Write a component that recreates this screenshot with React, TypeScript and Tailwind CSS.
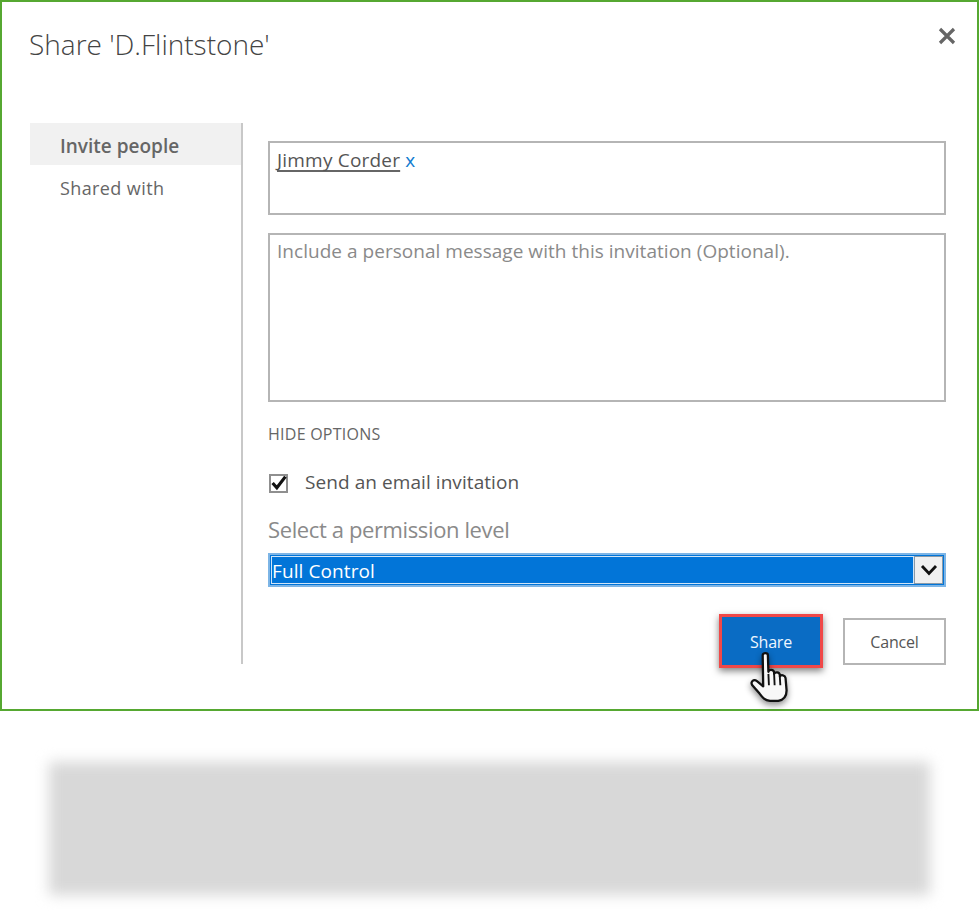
export default function App() {
  return (
    <div className="w-[979px] h-[923px] bg-white overflow-hidden font-['Open_Sans','Noto_Sans',sans-serif] text-[#555]">
      <div className="h-[711px] border-2 border-[#56a831] flex flex-col">
        <div className="flex justify-between items-start pl-[27px] pr-[21px] pt-[23px] h-[121px]">
          <h1 className="text-[28px] leading-[38px] font-light text-[#444] tracking-[0px]">Share 'D.Flintstone'</h1>
          <svg width="18" height="18" viewBox="0 0 18 18" className="mt-[2px]">
            <path d="M2 2 L16 16 M16 2 L2 16" stroke="#666" strokeWidth="3.2" />
          </svg>
        </div>
        <div className="flex pl-[28px] pr-[31px]">
          <div className="w-[213px] h-[541px] border-r-2 border-[#c8c8c8]">
            <div className="h-[42px] bg-[#f1f1f1] pl-[30px] pt-[4px] flex items-center text-[19px] font-semibold text-[#666] tracking-[0px]">Invite people</div>
            <div className="h-[42px] pl-[30px] pt-[4px] flex items-center text-[18px] text-[#666] tracking-[0.4px]">Shared with</div>
          </div>
          <div className="flex-1 pl-[25px] pt-[18px] flex flex-col">
            <div className="h-[74px] border-2 border-[#b5b5b5] px-[7px] pt-[4px] text-[19px] leading-[26px] tracking-[0.2px]">
              <span className="underline decoration-[#666] decoration-2 underline-offset-[3px] [text-decoration-skip-ink:none] text-[#555]">Jimmy Corder</span>{" "}
              <span className="text-[#0f7bd0]">x</span>
            </div>
            <div className="mt-[18px] h-[169px] border-2 border-[#b5b5b5] px-[7px] pt-[3px] text-[19px] leading-[26px] tracking-[0.03px] text-[#8a8a8a]">
              Include a personal message with this invitation (Optional).
            </div>
            <div className="mt-[20px] h-[24px] flex items-center text-[16px] text-[#666] tracking-[0.25px]">HIDE OPTIONS</div>
            <div className="mt-[26px] flex items-center h-[24px]">
              <div className="ml-[1px] mb-[2px] w-[19px] h-[19px] border-2 border-[#8f8f8f] flex items-center justify-center">
                <svg width="16" height="16" viewBox="0 0 15 15" className="shrink-0">
                  <path d="M1.5 7.5 L5.5 12 L13.5 1.5" fill="none" stroke="#111" strokeWidth="3" />
                </svg>
              </div>
              <span className="ml-[17px] mb-[4px] text-[19px] text-[#555] tracking-[0.07px]">Send an email invitation</span>
            </div>
            <div className="mt-[18px] h-[30px] flex items-center text-[22px] text-[#8a8a8a] tracking-[-0.38px]">Select a permission level</div>
            <div className="mt-[9px] h-[34px] border-2 border-[#7db5e6] flex items-stretch bg-[#0275d8] p-[1px]">
              <div className="flex-1 border border-[#cfe4f7] text-white text-[19px] leading-[28px] tracking-[0.1px]">Full Control</div>
              <div className="w-[29px] bg-[#f0f0f0] border border-[#8a9aa8] flex items-center justify-center">
                <svg width="18" height="12" viewBox="0 0 18 12">
                  <path d="M2 2 L9 9.5 L16 2" fill="none" stroke="#111" strokeWidth="2.8" />
                </svg>
              </div>
            </div>
            <div className="mt-[27px] flex justify-end items-center gap-[20px]">
              <div className="relative">
                <div className="w-[104px] h-[54px] bg-[#0a6cc4] border-[3px] border-[#f04848] shadow-[0_3px_7px_rgba(0,0,0,0.5)] text-[#eef6ff] text-[16px] pt-[2px] flex items-center justify-center tracking-[-0.2px]">Share</div>
                <svg width="44" height="54" viewBox="0 0 42 52" className="absolute left-[30px] top-[37px] drop-shadow-[0_3px_3px_rgba(0,0,0,0.45)]">
                  <path
                    d="M13 4 C13 1.5 18 1.5 18 4 L18.5 20 C19 17.5 23.5 17.5 24 20.5 L24 22 C25 20 29 20 29.5 23 L29.5 24.5 C30.5 22.5 34.5 23 35 26 L36 38 C36 44 33 47 28 48 L20 48 C15 47.5 13 45 10 41 L3 33 C1 30 4 26.5 7.5 29 L13.5 34 Z"
                    fill="#f8f8f8"
                    stroke="#111"
                    strokeWidth="2.2"
                    strokeLinejoin="round"
                  />
                  <path d="M18.5 22 L19 33 M24 22 L24.5 33 M29.5 25 L30 33" stroke="#111" strokeWidth="1.8" fill="none" />
                </svg>
              </div>
              <div className="w-[103px] h-[47px] border-2 border-[#b5b5b5] text-[16px] pt-[2px] flex items-center justify-center text-[#555] tracking-[-0.2px]">Cancel</div>
            </div>
          </div>
        </div>
      </div>
      <div className="mt-[51px] mx-[49px] h-[133px] bg-[#d8d8d8] blur-[7px]" />
    </div>
  );
}
